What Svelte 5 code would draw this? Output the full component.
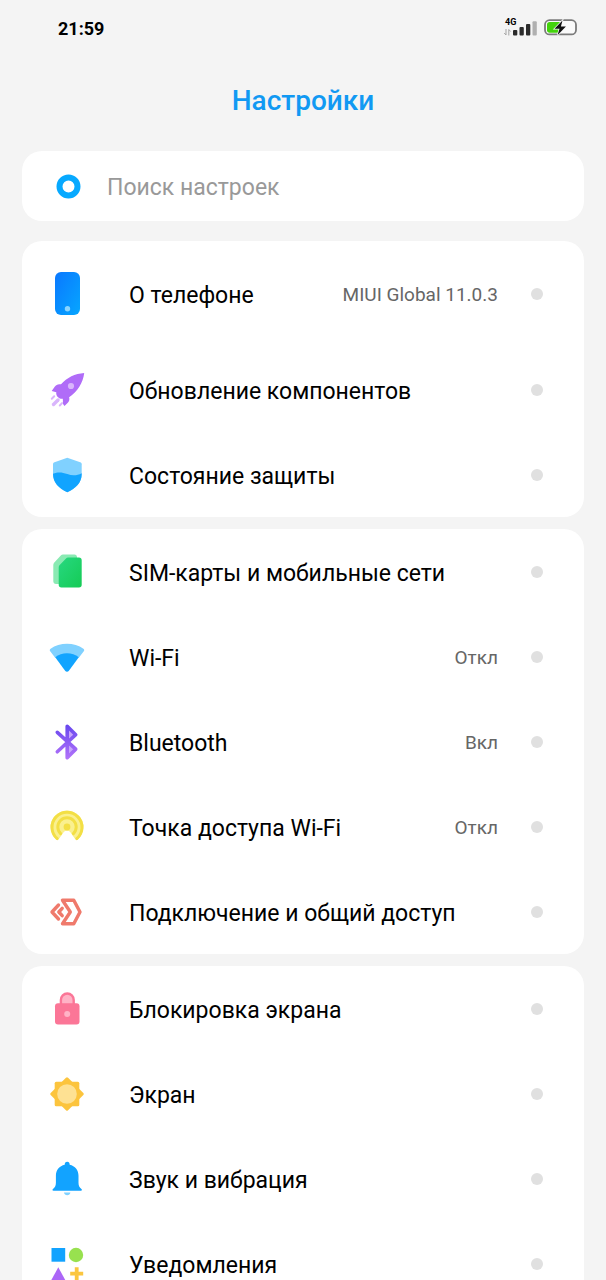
<script>
	let query = $state('');

	const groups = [
		[
			{ icon: 'phone', label: 'О телефоне', value: 'MIUI Global 11.0.3', tall: true },
			{ icon: 'rocket', label: 'Обновление компонентов' },
			{ icon: 'shield', label: 'Состояние защиты' }
		],
		[
			{ icon: 'sim', label: 'SIM-карты и мобильные сети' },
			{ icon: 'wifi', label: 'Wi-Fi', value: 'Откл' },
			{ icon: 'bluetooth', label: 'Bluetooth', value: 'Вкл' },
			{ icon: 'hotspot', label: 'Точка доступа Wi-Fi', value: 'Откл' },
			{ icon: 'share', label: 'Подключение и общий доступ' }
		],
		[
			{ icon: 'lock', label: 'Блокировка экрана' },
			{ icon: 'sun', label: 'Экран' },
			{ icon: 'bell', label: 'Звук и вибрация' },
			{ icon: 'apps', label: 'Уведомления' }
		]
	];
</script>

{#snippet icon(name)}
	<svg class="icon" viewBox="0 0 48 48" aria-hidden="true">
		{#if name === 'phone'}
			<defs>
				<linearGradient id="phone" x1="0" y1="0" x2="1" y2="1">
					<stop offset="0" stop-color="#0a78ff" />
					<stop offset="1" stop-color="#06a6ff" />
				</linearGradient>
			</defs>
			<rect x="12" y="2" width="25" height="43" rx="6" fill="url(#phone)" />
			<circle cx="24.5" cy="38.7" r="2.7" fill="#8ad4ff" />
		{:else if name === 'rocket'}
			<path
				d="M41.2 7C32 7.6 24 11.6 18 18.3c-3-.5-4.8.3-6.3 2.5L8.7 25l4.6 1.2c-.3 1.8.2 3.5 1.5 4.8 1.3 1.400 3.100 2 5 1.800L20 38l1.500 2 3.300-3.300c1.600-1.600 1.900-3.400 1.300-5.500C34.500 25.500 40 17 41.200 7z"
				fill="#b06cf8"
			/>
			<circle cx="28" cy="20" r="3.1" fill="#d9b5fc" />
			<g stroke="#d9b5fc" stroke-linecap="round">
				<path d="M10.5 38.5l4.5-4.5" stroke-width="3.4" />
				<path d="M8.8 32.7l2.4-2.4M16.8 39.5l2.2-2.4" stroke-width="2" />
			</g>
		{:else if name === 'shield'}
			<path
				d="M24.3 6.7l12.9 4.5c1 .4 1.5 1 1.5 2V23c0 8.5-6 14.5-14.4 18.2C16 37.5 10 31.5 10 23v-9.8c0-1 .5-1.6 1.500-2z"
				fill="#80d1ff"
			/>
			<path
				d="M10 22.8c5-2 9-1.7 14.3.3 5 1.9 9.6 1.7 14.4-.8v1c0 8.4-6 14.2-14.4 17.9C16 37.5 10 31.5 10 23z"
				fill="#11a4ff"
			/>
		{:else if name === 'sim'}
			<defs>
				<linearGradient id="sim" x1="0" y1="0" x2="1" y2="1">
					<stop offset="0" stop-color="#27d880" />
					<stop offset="1" stop-color="#15cb55" />
				</linearGradient>
			</defs>
			<path d="M20 6.500h11.500c1.500 0 2.500 1 2.500 2.500V36H13c-1.600 0-2.700-1.100-2.700-2.700V17c0-1 .3-1.800 1-2.500l6.500-7c.6-.7 1.300-1 2.200-1z" fill="#8aeab3" />
			<path d="M25 9.500h11c1.700 0 2.700 1 2.700 2.700v24.600c0 1.700-1 2.700-2.700 2.700H18.400c-1.700 0-2.700-1-2.700-2.700V19.500c0-1 .3-1.700 1-2.400l6.300-6.700c.5-.6 1.200-.9 2-.9z" fill="url(#sim)" />
		{:else if name === 'wifi'}
			<path d="M7.600 15.700C16.500 9.200 31.500 9.200 40.400 15.700c.9.700 1.100 1.700.4 2.600L36 24.500H12L7.200 18.300c-.7-.9-.5-1.900.4-2.600z" fill="#80d1ff" />
			<path d="M12.200 24.300c6.500-5.400 17.100-5.400 23.600 0L25.900 37.700c-1.100 1.400-2.700 1.400-3.800 0z" fill="#11a4ff" />
		{:else if name === 'bluetooth'}
			<defs>
				<linearGradient id="bt" gradientUnits="userSpaceOnUse" x1="0" y1="6" x2="0" y2="42">
					<stop offset="0" stop-color="#6646ee" />
					<stop offset="1" stop-color="#b474fa" />
				</linearGradient>
			</defs>
			<path d="M24.5 24V9.5L32.5 17zM24.5 24v14.5L32.5 31z" fill="#c7a5fb" />
			<path
				d="M14.300 14.300L32.700 31.200 24.200 39.700V8.300l8.500 8.500L14.300 33.800"
				fill="none"
				stroke="url(#bt)"
				stroke-width="3.6"
				stroke-linecap="round"
				stroke-linejoin="round"
			/>
		{:else if name === 'hotspot'}
			<path d="M24 7.500A16.500 16.500 0 0 0 13 36.300c1 .9 2.100.8 2.900-.2L20.800 29c1.500-1.700 4.900-1.700 6.400 0l4.900 7.100c.8 1 1.900 1.100 2.900.2A16.500 16.500 0 0 0 24 7.500z" fill="#faf08f" />
			<g fill="none" stroke="#f3df45" stroke-width="3" stroke-linecap="round">
				<path d="M14.200 35.600a15 15 0 1 1 19.600 0" />
				<path d="M17.600 30.600a9.200 9.200 0 1 1 12.800 0" />
			</g>
			<circle cx="24" cy="24" r="3.4" fill="#f3df45" />
		{:else if name === 'share'}
			<g fill="none" stroke="#ef7a6c" stroke-width="3.4" stroke-linejoin="round">
				<path d="M19.500 12.200H30.800L37 24 30.800 35.700H19.500L27.300 24z" />
				<path d="M15.500 17L9 24l6.500 7M19.200 20.300L15.800 24l3.400 3.700" stroke-linecap="round" />
			</g>
		{:else if name === 'lock'}
			<path d="M17.900 20v-5.100a6.400 6.400 0 0 1 12.800 0V20" fill="#ffb3c6" stroke="#fb7697" stroke-width="2.4" />
			<rect x="12" y="18.200" width="24.500" height="21.300" rx="3" fill="#fb7697" />
			<circle cx="24.200" cy="28.900" r="3" fill="#ffb3c6" />
		{:else if name === 'sun'}
			<g fill="#fcc43d">
				<rect x="11.700" y="11.700" width="24.600" height="24.600" rx="1.500" />
				<rect x="11.700" y="11.700" width="24.600" height="24.600" rx="1.500" transform="rotate(45 24 24)" />
			</g>
			<circle cx="24" cy="24" r="9.8" fill="#fee193" />
		{:else if name === 'bell'}
			<path d="M24.200 6.800c1.700 0 2.500 1.100 2.500 2.900 5.300 1.300 8.800 5.300 8.800 11v7c0 2.900 1 4.800 2.900 6.300.9.700.6 1.800-.5 1.800H10.500c-1.100 0-1.400-1.100-.5-1.800 1.900-1.500 2.900-3.400 2.900-6.300v-7c0-5.700 3.500-9.700 8.800-11 0-1.800.8-2.900 2.500-2.900z" fill="#12a3ff" />
			<path d="M21 37.500h6.400c-.3 1.700-1.500 2.700-3.200 2.700s-2.900-1-3.200-2.700z" fill="#80d1ff" />
		{:else if name === 'apps'}
			<rect x="8.500" y="8" width="13.700" height="13.700" fill="#12a3ff" />
			<circle cx="33" cy="15" r="7.2" fill="#98e14f" />
			<path d="M15.300 27.300L22.800 41H7.800z" fill="#ab66f7" />
			<path d="M33.700 27.200v13M27.200 33.700h13" stroke="#fbc63f" stroke-width="3.8" />
		{/if}
	</svg>
{/snippet}

<div class="screen">
	<header class="status">
		<time>21:59</time>
		<div class="indicators">
			<svg width="34" height="20" viewBox="0 0 34 20" role="img" aria-label="4G">
				<text class="network" x="1" y="7">4G</text>
				<g fill="#2b2b2b">
					<rect x="9" y="12" width="4.300" height="5.500" rx="1" />
					<rect x="15.500" y="9" width="4.300" height="8.500" rx="1" />
					<rect x="22" y="6" width="4.300" height="11.500" rx="1" />
				</g>
				<rect x="28.500" y="3.300" width="4.300" height="14.200" rx="1" fill="#b0b0b0" />
				<path d="M2 11v6l-1.800-2M4.800 17.500v-6l1.800 2" fill="none" stroke="#a5a5a5" />
			</svg>
			<svg width="34" height="20" viewBox="0 0 34 20" role="img" aria-label="battery">
				<rect x="1" y="2.200" width="31" height="14.200" rx="4.500" fill="#fafafa" stroke="#7b7b7b" stroke-width="1.8" />
				<path d="M5.500 4H16L14.500 14.700h-9C4 14.700 3 13.700 3 12.200V6.500C3 5 4 4 5.500 4z" fill="#43d30b" />
				<path d="M18.500 2.400L10.500 10.800h5l-2 6.400 8.400-8.600h-5z" fill="#111" stroke="#fafafa" stroke-width="1.4" paint-order="stroke" />
			</svg>
		</div>
	</header>

	<h1>Настройки</h1>

	<label class="search">
		<svg class="icon" viewBox="0 0 48 48" aria-hidden="true">
			<circle cx="24.5" cy="24.5" r="9" fill="none" stroke="#07a9ff" stroke-width="6" />
		</svg>
		<input type="text" placeholder="Поиск настроек" bind:value={query} />
	</label>

	<main>
		{#each groups as group}
			<section class="card">
				{#each group as item}
					<button class="row" class:tall={item.tall}>
						{@render icon(item.icon)}
						<span class="label">{item.label}</span>
						{#if item.value}
							<span class="value">{item.value}</span>
						{/if}
						<span class="dot"></span>
					</button>
				{/each}
			</section>
		{/each}
	</main>
</div>

<style>
	:global(body) {
		background: #f4f4f4;
	}

	.screen {
		box-sizing: border-box;
		height: 100vh;
		overflow: hidden;
		padding: 0 22px;
		background: #f4f4f4;
		color: #000;
		font-family: Roboto, 'Noto Sans', sans-serif;
	}

	.status {
		display: flex;
		align-items: center;
		justify-content: space-between;
		height: 56px;
		padding: 0 6px 0 36px;
	}

	time {
		font-size: 18px;
		font-weight: 700;
	}

	.indicators {
		display: flex;
		gap: 6px;
	}

	.network {
		font-size: 9px;
		font-weight: 700;
	}

	h1 {
		margin: 25px 0 30px;
		color: #1199f3;
		font-size: 28px;
		font-weight: 500;
		line-height: 40px;
		text-align: center;
	}

	.search {
		display: flex;
		align-items: center;
		gap: 15px;
		height: 70px;
		padding: 0 20px 0 22px;
		margin-bottom: 20px;
		border-radius: 20px;
		background: #fff;
	}

	.search input {
		flex: 1;
		min-width: 0;
		padding: 2px 0 0;
		border: 0;
		outline: 0;
		background: none;
		color: #000;
		font: inherit;
		font-size: 23px;
	}

	.search input::placeholder {
		color: #999;
		opacity: 1;
	}

	main {
		display: flex;
		flex-direction: column;
		gap: 12px;
	}

	.card {
		overflow: hidden;
		border-radius: 20px;
		background: #fff;
	}

	.row {
		display: flex;
		align-items: center;
		width: 100%;
		height: 85px;
		padding: 0 41px 0 21px;
		border: 0;
		background: none;
		color: inherit;
		font: inherit;
		text-align: left;
		cursor: pointer;
	}

	.row.tall {
		height: 106px;
	}

	.row:active {
		background: #f0f0f0;
	}

	.icon {
		flex: none;
		width: 48px;
		height: 48px;
	}

	.label {
		flex: 1;
		padding-top: 4px;
		margin-left: 38px;
		font-size: 23px;
		line-height: 28px;
	}

	.value {
		padding-top: 2px;
		color: #666;
		font-size: 19px;
		line-height: 28px;
	}

	.dot {
		flex: none;
		width: 12px;
		height: 12px;
		margin-left: 33px;
		border-radius: 50%;
		background: #e0e0e0;
	}
</style>
